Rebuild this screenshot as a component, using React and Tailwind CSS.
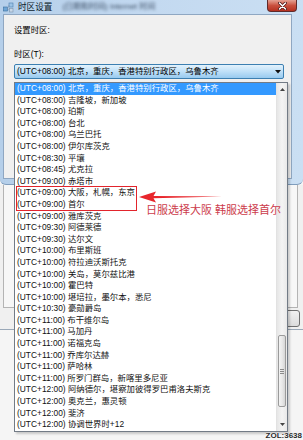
import React from "react";

const rows = [
  "(UTC+08:00) 北京，重庆，香港特别行政区，乌鲁木齐",
  "(UTC+08:00) 吉隆坡，新加坡",
  "(UTC+08:00) 珀斯",
  "(UTC+08:00) 台北",
  "(UTC+08:00) 乌兰巴托",
  "(UTC+08:00) 伊尔库茨克",
  "(UTC+08:30) 平壤",
  "(UTC+08:45) 尤克拉",
  "(UTC+09:00) 赤塔市",
  "(UTC+09:00) 大阪，札幌，东京",
  "(UTC+09:00) 首尔",
  "(UTC+09:00) 雅库茨克",
  "(UTC+09:30) 阿德莱德",
  "(UTC+09:30) 达尔文",
  "(UTC+10:00) 布里斯班",
  "(UTC+10:00) 符拉迪沃斯托克",
  "(UTC+10:00) 关岛，莫尔兹比港",
  "(UTC+10:00) 霍巴特",
  "(UTC+10:00) 堪培拉，墨尔本，悉尼",
  "(UTC+10:30) 豪勋爵岛",
  "(UTC+11:00) 布干维尔岛",
  "(UTC+11:00) 马加丹",
  "(UTC+11:00) 诺福克岛",
  "(UTC+11:00) 乔库尔达赫",
  "(UTC+11:00) 萨哈林",
  "(UTC+11:00) 所罗门群岛，新喀里多尼亚",
  "(UTC+12:00) 阿纳德尔，堪察加彼得罗巴甫洛夫斯克",
  "(UTC+12:00) 奥克兰，惠灵顿",
  "(UTC+12:00) 斐济",
  "(UTC+12:00) 协调世界时+12",
];

function TitleIcon() {
  return (
    <svg width="11" height="11" viewBox="0 0 11 11">
      <rect x="0.5" y="5" width="4" height="4" fill="#6fa6d6" stroke="#3b6f9e" strokeWidth="0.6" />
      <rect x="6" y="1" width="4" height="4" fill="#9cc3e6" stroke="#4d7fae" strokeWidth="0.6" />
      <rect x="6.5" y="6.5" width="3.5" height="3.5" fill="#c8d8e8" stroke="#7d95ad" strokeWidth="0.6" />
      <path d="M4.5 7 L6 3 M4.5 7.5 L6.5 8" stroke="#7d95ad" strokeWidth="0.6" fill="none" />
    </svg>
  );
}

function CloseGlyph() {
  return (
    <svg width="9" height="8" viewBox="0 0 9 8">
      <path d="M1.5 1 L7.5 7 M7.5 1 L1.5 7" stroke="#4a1010" strokeWidth="3" strokeLinecap="round" />
      <path d="M1.5 1 L7.5 7 M7.5 1 L1.5 7" stroke="#ffffff" strokeWidth="1.6" strokeLinecap="round" />
    </svg>
  );
}

export default function App() {
  return (
    <div className="relative w-[303px] h-[440px] overflow-hidden bg-[#f5f5f5] font-['Liberation_Sans','Noto_Sans_CJK_SC',sans-serif] text-[8.4px] text-black">
      {/* 时区设置 dialog */}
      <div className="h-[185px] flex flex-col bg-gradient-to-r from-[#b5cfea] via-[#c3d9f0] to-[#cadff3] rounded-b-[6px] border-b border-[#7f9dbd]">
        <div className="h-[14px] flex items-center pl-[3px]">
          <TitleIcon />
          <span className="ml-[4px] text-[8.6px] leading-[11px] text-[#0c1a2a]">时区设置</span>
          <span className="ml-[10px] text-[8px] text-[#3d4f66] blur-[1.4px] whitespace-nowrap">(日期和时间) Internet 时间</span>
          <div className="ml-auto mr-[6px] self-start w-[30px] h-[12px] rounded-b-[4px] border border-t-0 border-[#5f2a2a] bg-gradient-to-b from-[#e4a193] via-[#c9503e] to-[#b5301f] flex items-center justify-center">
            <CloseGlyph />
          </div>
        </div>
        <div className="flex-1 ml-[3px] mr-[11px] mb-[5px] bg-[#f0f0f0] border border-[#8fa7c2] pl-[10px] pt-[10px]">
          <div className="leading-[11px]">设置时区:</div>
          <div className="mt-[13px] leading-[11px]">时区(T):</div>
          <div className="mt-[4px] w-[270px] h-[15px] rounded-[2px] border border-[#3c7fb1] bg-gradient-to-b from-[#e3f2fc] via-[#bfe0f8] to-[#98caef] flex items-center pl-[2px]">
            <span className="flex-1 leading-[11px] whitespace-nowrap">(UTC+08:00) 北京，重庆，香港特别行政区，乌鲁木齐</span>
            <svg width="6" height="4" viewBox="0 0 6 4" className="mr-[2px]">
              <path d="M0 0 L6 0 L3 3.5 Z" fill="#111" />
            </svg>
          </div>
        </div>
      </div>

      {/* parent window behind */}
      <div className="h-[145px] flex flex-col bg-[#f0f0f0] border-b border-[#9aa8b8]">
        <div className="h-[123px] ml-[3px] mr-[5px] border-x border-b border-[#b4b4b4] bg-[#f7f7f7]" />
        <div className="flex-1 flex items-center justify-end pr-[3px]">
          <div className="w-[60px] h-[17px] rounded-[3px] border border-[#707070] bg-gradient-to-b from-[#f2f2f2] to-[#dcdcdc]" />
        </div>
      </div>

      {/* dropdown list (overlay) */}
      <div className="absolute left-[14px] top-[82px] w-[274px] border border-[#727b86] bg-white flex shadow-[2px_2px_2px_rgba(0,0,0,0.18)]">
        <div className="flex-1 flex flex-col">
          {rows.map((r, i) => (
            <div
              key={i}
              className={
                "h-[11.6px] leading-[11.6px] pl-[2px] whitespace-nowrap overflow-hidden " +
                (i === 0 ? "bg-[#3399ff] text-white" : "text-[#111]")
              }
            >
              {r}
            </div>
          ))}
        </div>
        <div className="w-[11px] flex flex-col bg-gradient-to-r from-[#e6e6e6] via-[#f4f4f4] to-[#e9e9e9] border-l border-[#e2e2e2]">
          <div className="h-[12px] flex items-center justify-center">
            <svg width="5" height="3" viewBox="0 0 5 3"><path d="M0 3 L5 3 L2.5 0 Z" fill="#444" /></svg>
          </div>
          <div className="h-[240px]" />
          <div className="h-[72px] mx-[1px] rounded-[2px] border border-[#9b9b9b] bg-gradient-to-r from-[#f3f3f3] via-[#e9e9e9] to-[#d6d6d6] flex items-center justify-center">
            <div className="flex flex-col gap-[1px]">
              <div className="w-[4px] h-px bg-[#8a8a8a]" />
              <div className="w-[4px] h-px bg-[#8a8a8a]" />
              <div className="w-[4px] h-px bg-[#8a8a8a]" />
            </div>
          </div>
          <div className="flex-1" />
          <div className="h-[12px] flex items-center justify-center">
            <svg width="5" height="3" viewBox="0 0 5 3"><path d="M0 0 L5 0 L2.5 3 Z" fill="#444" /></svg>
          </div>
        </div>
      </div>

      {/* red annotation */}
      <div className="absolute left-[16px] top-[186px] w-[121px] h-[25px] border-[1.5px] border-[#e2242c]" />
      <svg className="absolute left-[138px] top-[190px]" width="90" height="14" viewBox="0 0 90 14">
        <path d="M1 7 L18 1.5 L15.5 6 L84 6.6 L15.5 8.2 L18 12.5 Z" fill="#e8262c" />
      </svg>
      <div className="absolute left-[146px] top-[203px] text-[11px] leading-[14px] text-[#cc3b4b] whitespace-nowrap">
        日服选择大阪 韩服选择首尔
      </div>

      {/* watermark */}
      <div className="absolute right-[1px] bottom-[0px] text-[8px] leading-[9px] font-bold text-[#2a2a2a] [text-shadow:0_0_1px_#fff,0_0_1px_#fff]">
        ZOL:3638
      </div>
    </div>
  );
}
